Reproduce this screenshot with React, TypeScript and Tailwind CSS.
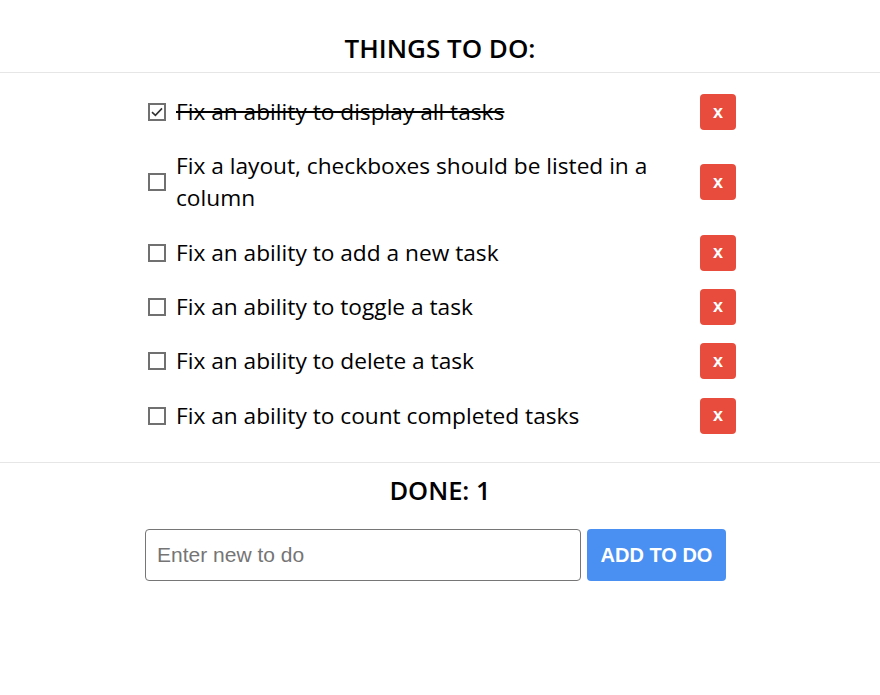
import React, { useState } from "react";

interface Todo {
  id: number;
  title: string;
  done: boolean;
}

const initialTodos: Todo[] = [
  { id: 1, title: "Fix an ability to display all tasks", done: true },
  { id: 2, title: "Fix a layout, checkboxes should be listed in a column", done: false },
  { id: 3, title: "Fix an ability to add a new task", done: false },
  { id: 4, title: "Fix an ability to toggle a task", done: false },
  { id: 5, title: "Fix an ability to delete a task", done: false },
  { id: 6, title: "Fix an ability to count completed tasks", done: false },
];

const App = () => {
  const [todos, setTodos] = useState<Todo[]>(initialTodos);
  const [text, setText] = useState("");

  const toggle = (id: number) => {
    setTodos(todos.map((t) => (t.id === id ? { ...t, done: !t.done } : t)));
  };

  const remove = (id: number) => {
    setTodos(todos.filter((t) => t.id !== id));
  };

  const add = (e: React.FormEvent<HTMLFormElement>) => {
    e.preventDefault();
    if (!text.trim()) return;
    setTodos([...todos, { id: Date.now(), title: text, done: false }]);
    setText("");
  };

  const doneCount = todos.filter((t) => t.done).length;

  return (
    <div className="min-h-screen bg-white text-black font-['Open_Sans',sans-serif]">
      <h1 className="pt-[32px] pb-[8px] text-center text-[26px] leading-[32px] font-semibold border-b border-[#e6e6e6]">
        THINGS TO DO:
      </h1>

      <ul className="w-[588px] pt-[12px] pb-[19px] ml-[148px]">
        {todos.map((todo) => (
          <li key={todo.id} className="flex items-center justify-between">
            <label className="flex items-center gap-[10px] py-[11.15px] w-[510px] cursor-pointer">
              <span
                onClick={() => toggle(todo.id)}
                className="flex-none w-[18px] h-[18px] border-2 border-[#707070] bg-white flex items-center justify-center"
              >
                {todo.done && (
                  <svg width="14" height="14" viewBox="0 0 14 14" fill="none">
                    <path d="M2 7.2 L5.4 10.4 L12 3.4" stroke="#333" strokeWidth="1.6" />
                  </svg>
                )}
              </span>
              <span
                className={
                  "text-[22.7px] leading-[32px] " + (todo.done ? "line-through decoration-black" : "")
                }
              >
                {todo.title}
              </span>
            </label>
            <button
              type="button"
              onClick={() => remove(todo.id)}
              className="flex-none w-[36px] h-[36px] rounded-[4px] bg-[#e74c3c] text-white font-bold text-[18px] font-['Liberation_Sans',sans-serif] flex items-center justify-center"
            >
              x
            </button>
          </li>
        ))}
      </ul>

      <div className="border-t border-[#e6e6e6] pt-[11px]">
        <p className="text-center text-[25.5px] leading-[32px] font-semibold">DONE: {doneCount}</p>
        <form onSubmit={add} className="mt-[23px] flex gap-[6px] ml-[145px]">
          <input
            type="text"
            value={text}
            onChange={(e) => setText(e.target.value)}
            placeholder="Enter new to do"
            className="w-[436px] h-[52px] px-[11px] rounded-[4px] border border-[#767676] text-[21px] font-['Liberation_Sans',sans-serif] placeholder:text-[#757575] outline-none"
          />
          <button
            type="submit"
            className="h-[52px] w-[139px] rounded-[4px] bg-[#4a90f2] text-white font-bold text-[20px] font-['Liberation_Sans',sans-serif]"
          >
            ADD TO DO
          </button>
        </form>
      </div>
    </div>
  );
};

export default App;
